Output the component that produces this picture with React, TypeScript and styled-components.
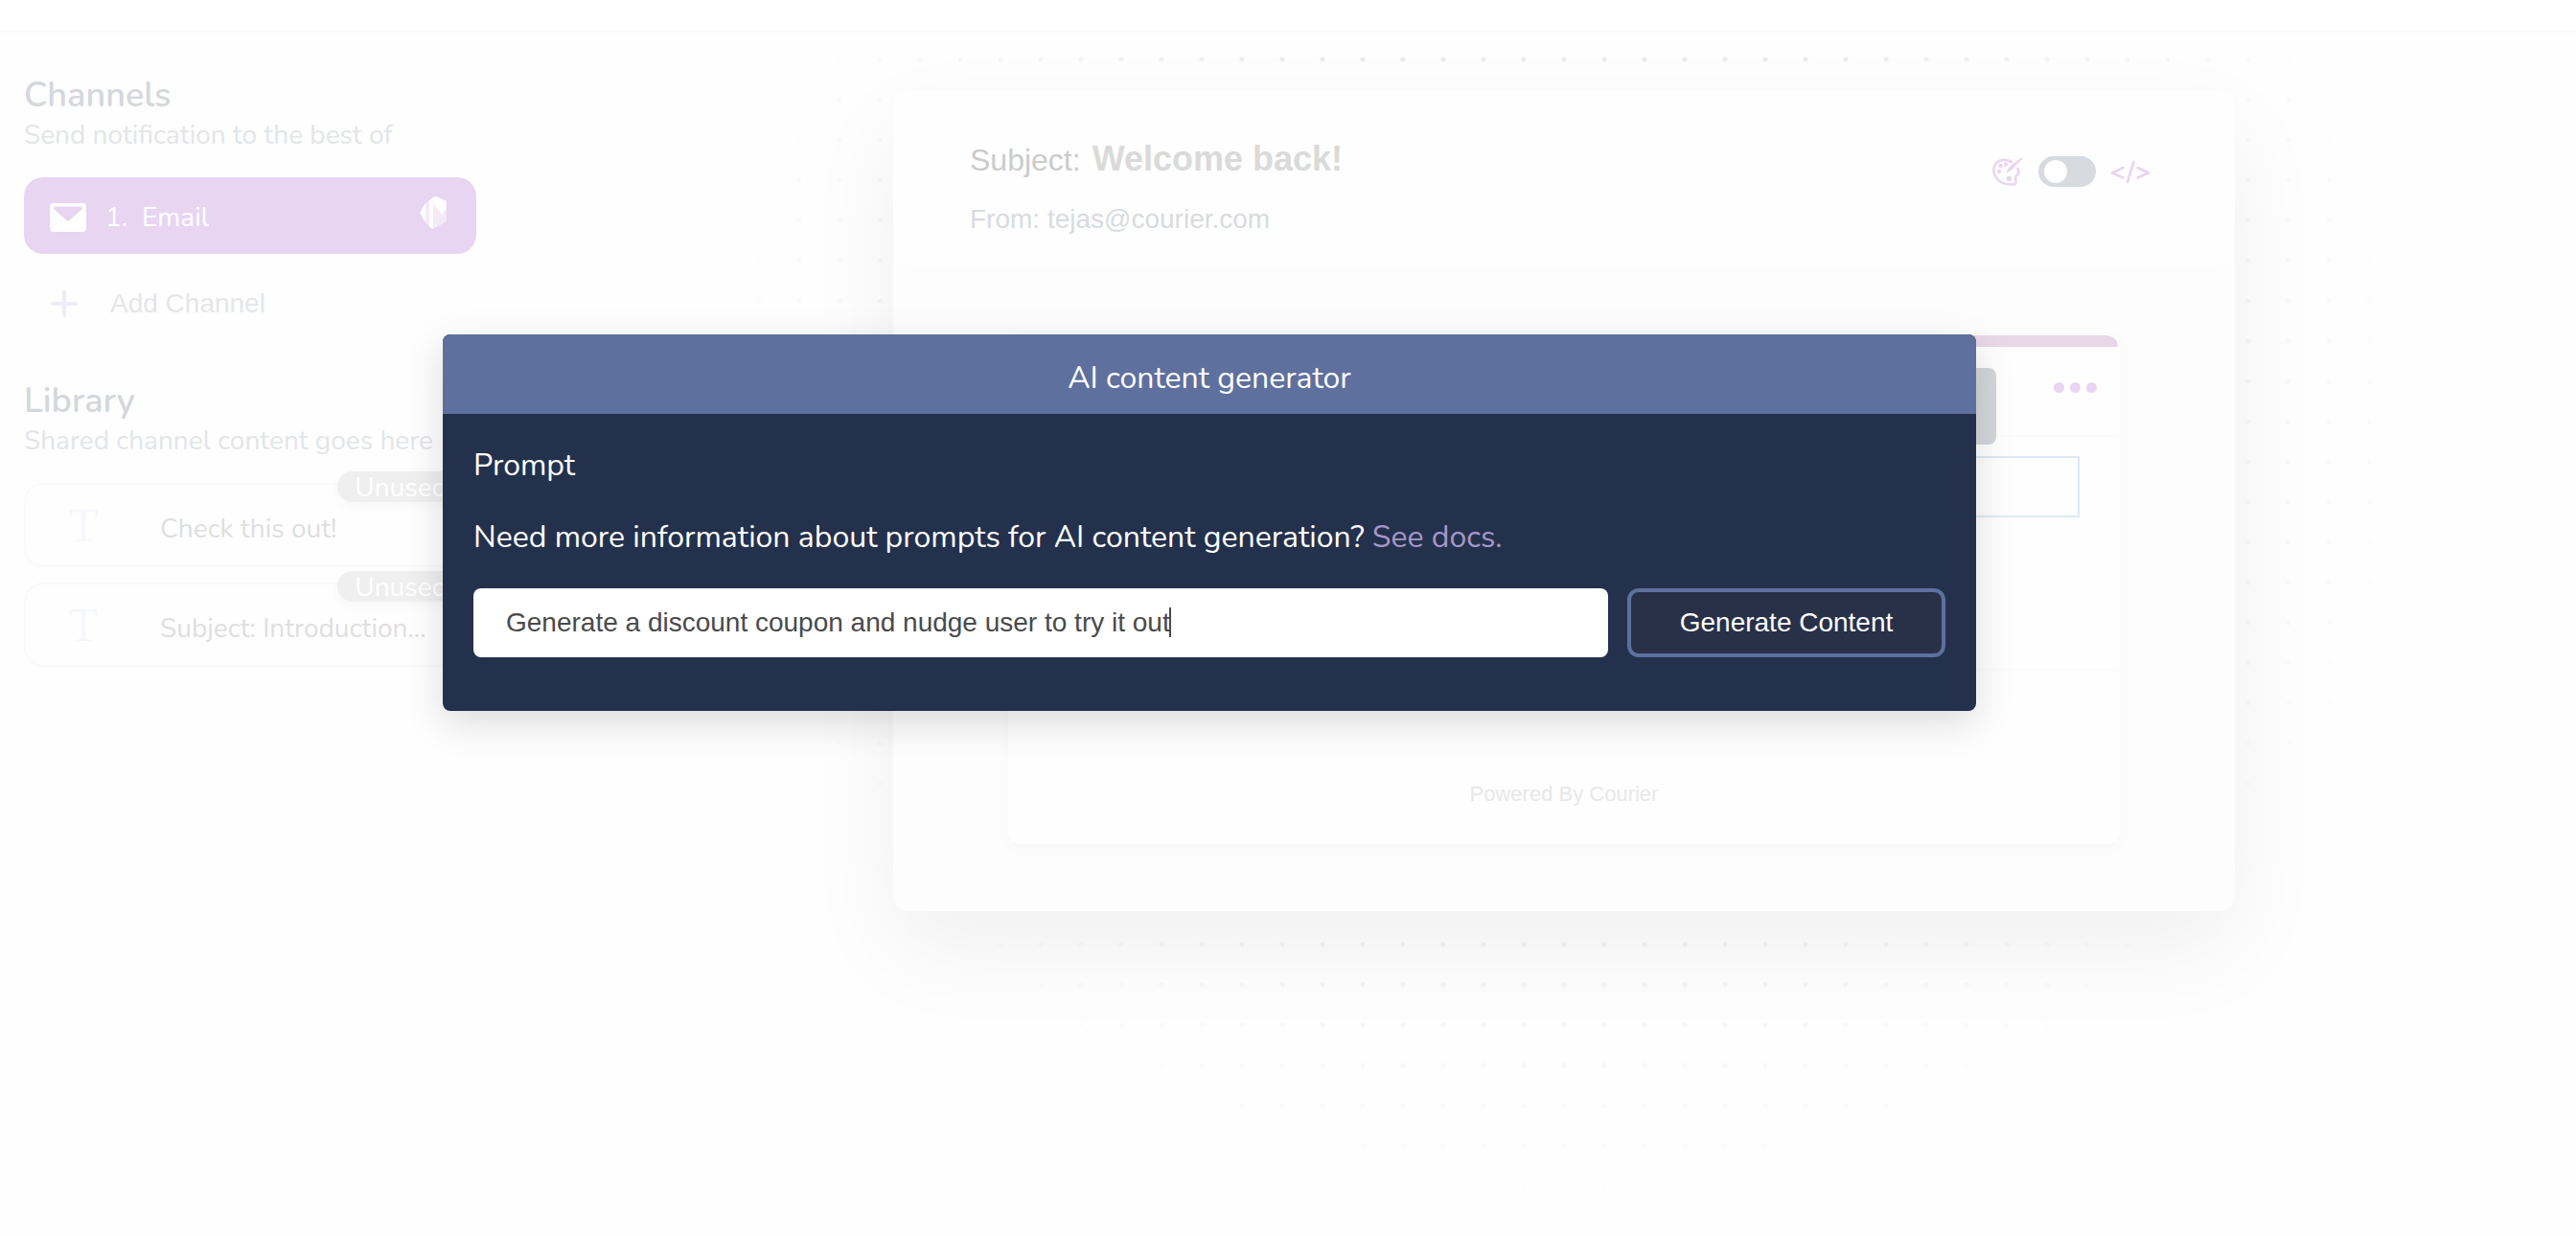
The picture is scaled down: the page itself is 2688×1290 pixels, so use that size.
import React, { useState } from "react";
import styled, { createGlobalStyle } from "styled-components";

const rounded = '"Nunito", Lato, "Open Sans", sans-serif';
const plain = '"Liberation Sans", Arial, sans-serif';

const GlobalStyle = createGlobalStyle`
  *, *::before, *::after { box-sizing: border-box; }
  body { margin: 0; background: #fefefe; font-family: ${rounded}; }
  h1, h2, p, ul, ol { margin: 0; padding: 0; list-style: none; }
  button, input { font: inherit; }
`;

const Page = styled.div`
  display: flex;
  flex-direction: column;
  min-height: 100vh;
`;
const TopBar = styled.header`
  height: 34px;
  background: #fff;
  border-bottom: 2px solid #fafafa;
`;
const Body = styled.div`
  flex: 1;
  display: grid;
  grid-template-columns: 576px minmax(0, 1fr);
`;

const Sidebar = styled.aside`
  display: flex;
  flex-direction: column;
  gap: 43px;
  padding: 43px 0 0 25px;
`;
const Section = styled.section`
  width: 472px;
`;
const SectionTitle = styled.h2`
  font-size: 36px;
  line-height: 46px;
  font-weight: 600;
  color: #d5d7dd;
`;
const SectionNote = styled.p`
  font-size: 28px;
  line-height: 36px;
  color: #e3e5ea;
  white-space: nowrap;
`;
const List = styled.ul`
  display: flex;
  flex-direction: column;
  gap: 16px;
  margin-top: 26px;
`;
const ChannelButton = styled.button`
  display: flex;
  align-items: center;
  width: 100%;
  height: 80px;
  padding: 3px 29px 0 27px;
  border: 0;
  border-radius: 20px;
  background: #e8d5f1;
  color: #fff;
  font-size: 28px;
`;
const ChannelIndex = styled.span`
  margin-left: 20px;
  width: 38px;
  text-align: left;
`;
const ChannelMark = styled.span`
  display: flex;
  margin-left: auto;
  padding-bottom: 10px;
`;
const AddButton = styled.button`
  display: flex;
  align-items: center;
  gap: 34px;
  width: 100%;
  height: 72px;
  padding: 0 28px;
  border: 0;
  background: none;
  font-family: ${plain};
  font-size: 28px;
  color: #e5e6ea;
`;
const LibraryCard = styled.li`
  position: relative;
  display: flex;
  align-items: center;
  height: 88px;
  padding-top: 8px;
  border: 2px solid #fafafa;
  border-radius: 20px;
  font-size: 28px;
  color: #dfdfdf;
`;
const TextGlyph = styled.span`
  width: 140px;
  padding: 0 0 8px 45px;
  font-family: "Liberation Serif", "Times New Roman", serif;
  font-size: 50px;
  line-height: 56px;
  color: #f5f7fa;
`;
const Badge = styled.span`
  position: absolute;
  top: -14px;
  right: 10px;
  height: 32px;
  padding: 0 18px;
  border-radius: 16px;
  background: #efefef;
  box-shadow: 0 4px 12px rgba(0, 0, 0, 0.03);
  color: #fff;
  line-height: 34px;
`;

const Canvas = styled.main`
  position: relative;
  display: flex;
  justify-content: center;
  align-items: flex-start;
  padding-top: 60px;
  &::before {
    content: "";
    position: absolute;
    inset: 0;
    background: radial-gradient(circle, #ebebeb 0 2px, transparent 3px) 27px 7px / 42px 42px;
    mask-image: radial-gradient(900px 820px at 50% 400px, #000 50%, transparent);
  }
`;
const EmailCard = styled.article`
  position: relative;
  width: 1400px;
  border-radius: 16px;
  background: #fdfdfd;
  box-shadow: 0 40px 100px rgba(0, 0, 0, 0.06);
`;
const EmailHead = styled.header`
  display: flex;
  justify-content: space-between;
  align-items: flex-start;
  height: 184px;
  padding: 48px 88px 0 80px;
  border-radius: 16px;
  background: #fefefe;
  font-family: ${plain};
`;
const SubjectLine = styled.div`
  display: flex;
  align-items: baseline;
  gap: 12px;
  font-size: 32px;
  line-height: 48px;
  color: #cbcbcb;
`;
const SubjectText = styled.h1`
  margin: 0;
  font-size: 36px;
  line-height: 48px;
  color: #dadada;
`;
const FromLine = styled.p`
  margin-top: 18px;
  font-size: 28px;
  line-height: 40px;
  color: #d8dbe0;
`;
const Tools = styled.div`
  display: flex;
  align-items: center;
  gap: 15px;
  padding-top: 21px;
`;
const IconButton = styled.button`
  display: flex;
  padding: 0;
  border: 0;
  background: none;
`;
const Toggle = styled.input`
  appearance: none;
  width: 60px;
  height: 32px;
  margin: 0;
  padding: 4px 6px;
  border-radius: 16px;
  background: #d7dadf;
  &::before {
    content: "";
    display: block;
    width: 24px;
    height: 24px;
    border-radius: 50%;
    background: #fff;
  }
  &:checked::before { margin-left: auto; }
`;
const Mail = styled.section`
  display: flex;
  flex-direction: column;
  margin: 72px 120px 70px;
  border-radius: 12px;
  background: #fefefe;
  box-shadow: 0 4px 16px rgba(0, 0, 0, 0.03);
  overflow: hidden;
  font-family: ${plain};
`;
const MailHead = styled.div`
  display: flex;
  justify-content: flex-end;
  align-items: flex-start;
  gap: 60px;
  height: 104px;
  padding: 22px 22px 0;
  margin-right: 2px;
  border-top: 12px solid #e8d8e7;
  border-radius: 0 12px 0 0;
`;
const BlockTools = styled.div`
  position: relative;
  z-index: 1;
  width: 320px;
  height: 80px;
  flex: none;
  border-radius: 8px;
  background: #d3d6da;
`;
const MoreButton = styled(IconButton)`
  gap: 6px;
  padding-top: 15px;
  &::before, &::after, & > i {
    content: "";
    width: 11px;
    height: 11px;
    border-radius: 50%;
    background: #e8d5f1;
  }
`;
const MailBody = styled.div`
  height: 246px;
  padding: 20px 42px;
  border-top: 2px solid #fcfcfc;
  border-bottom: 2px solid #fcfcfc;
`;
const SelectedBlock = styled.div`
  height: 64px;
  border: 2px solid #dbe9f6;
`;
const MailFoot = styled.footer`
  height: 181px;
  padding-top: 113px;
  font-size: 22px;
  line-height: 32px;
  text-align: center;
  color: #e8e8e8;
`;

const Dialog = styled.section`
  position: absolute;
  z-index: 10;
  top: 349px;
  left: 462px;
  width: 1600px;
  border-radius: 8px;
  background: #24314c;
  box-shadow: 0 12px 40px rgba(0, 0, 0, 0.14);
  color: #fff;
  font-size: 32px;
  overflow: hidden;
`;
const DialogTitle = styled.h2`
  padding: 26px 0 17px;
  background: #5e709e;
  font-size: 32px;
  line-height: 40px;
  font-weight: 400;
  text-align: center;
`;
const DialogForm = styled.form`
  padding: 34px 32px 56px;
`;
const PromptLabel = styled.label`
  display: block;
  line-height: 40px;
`;
const Help = styled.p`
  margin-top: 35px;
  line-height: 40px;
`;
const DocsLink = styled.a`
  color: #a598c8;
  text-decoration: none;
`;
const PromptRow = styled.div`
  display: flex;
  gap: 20px;
  margin-top: 33px;
  font-family: ${plain};
  font-size: 28px;
`;
const PromptField = styled.div`
  position: relative;
  flex: 1;
  display: flex;
`;
const PromptInput = styled.input`
  width: 100%;
  height: 72px;
  padding: 0 34px;
  border: 0;
  border-radius: 8px;
  background: #fff;
  color: #4a4a4a;
  outline: 0;
`;
const Caret = styled.span`
  position: absolute;
  top: 20px;
  left: 726px;
  width: 2px;
  height: 31px;
  background: #4a4a4a;
`;
const GenerateButton = styled.button`
  width: 332px;
  height: 72px;
  border: 4px solid #5e709e;
  border-radius: 12px;
  background: #283148;
  color: #fff;
`;

const MailIcon = () => (
  <svg width="38" height="30" viewBox="0 0 38 30" aria-hidden="true">
    <path
      fill="#fff"
      fillRule="evenodd"
      d="M4 0h30a4 4 0 0 1 4 4v22a4 4 0 0 1-4 4H4a4 4 0 0 1-4-4V4a4 4 0 0 1 4-4zM6 3.500C4 3.500 3.600 5.500 4.800 6.700L17.600 18q1.400 1.200 2.800 0L33.200 6.700C34.400 5.500 34 3.500 32 3.500z"
    />
  </svg>
);
const GemIcon = () => (
  <svg width="30" height="34" viewBox="0 0 30 34" aria-hidden="true">
    <path fill="#fff" opacity=".5" d="M6 7 16 0l12 6v20l-14 8-8-6z" />
    <path fill="#fff" d="M0 17 6 7v20zM10 4l4-3v33l-4-2zM14 1l3-1 11 5v7l-5 7-9-12z" />
  </svg>
);
const PlusIcon = () => (
  <svg width="28" height="28" viewBox="0 0 28 28" stroke="#eeecf5" strokeWidth="4" strokeLinecap="round" aria-hidden="true">
    <path d="M14 2v24M2 14h24" />
  </svg>
);
const PaletteIcon = () => (
  <svg width="34" height="32" viewBox="0 0 34 32" fill="none" stroke="#e8d5f1" strokeLinecap="round" aria-hidden="true">
    <path strokeWidth="2.600" d="M21 6C12 1 2.500 5.500 2.500 14.500 2.500 24 11 30 22 29.500c6-.2 3-3.500 3-6.500 0-4 4.500-3.500 3.500-7.500-.3-1-1-1-1-2.500" />
    <path fill="#e8d5f1" strokeWidth="1.500" strokeLinejoin="round" d="M32 2 22.500 8.500c-3 2.300-4.500 4.500-6 8 3-1.500 5.500-3.500 7.500-6.500z" />
    <g fill="#e8d5f1" stroke="none">
      <circle cx="15" cy="8.500" r="2.200" />
      <circle cx="9.500" cy="10" r="2.200" />
      <circle cx="8" cy="16" r="2.200" />
      <circle cx="18.500" cy="23.500" r="2.800" />
    </g>
  </svg>
);
const CodeIcon = () => (
  <svg width="42" height="24" viewBox="0 0 42 24" fill="none" stroke="#e8d5f1" strokeWidth="2.600" strokeLinecap="round" strokeLinejoin="round" aria-hidden="true">
    <path d="M13.500 8 2 13.500l11.500 5M28.500 8 40 13.500l-11.500 5M24.500 2 18 23" />
  </svg>
);

const library = ["Check this out!", "Subject: Introduction..."];

export default function App() {
  const [prompt, setPrompt] = useState("Generate a discount coupon and nudge user to try it out");
  return (
    <>
      <GlobalStyle />
      <Page>
        <TopBar />
        <Body>
          <Sidebar>
            <Section>
              <SectionTitle>Channels</SectionTitle>
              <SectionNote>Send notification to the best of</SectionNote>
              <List as="div">
                <ChannelButton type="button">
                  <MailIcon />
                  <ChannelIndex>1.</ChannelIndex>
                  Email
                  <ChannelMark><GemIcon /></ChannelMark>
                </ChannelButton>
                <AddButton type="button">
                  <PlusIcon />
                  Add Channel
                </AddButton>
              </List>
            </Section>
            <Section>
              <SectionTitle>Library</SectionTitle>
              <SectionNote>Shared channel content goes here</SectionNote>
              <List>
                {library.map((name) => (
                  <LibraryCard key={name}>
                    <TextGlyph aria-hidden="true">T</TextGlyph>
                    {name}
                    <Badge>Unused</Badge>
                  </LibraryCard>
                ))}
              </List>
            </Section>
          </Sidebar>
          <Canvas>
            <EmailCard>
              <EmailHead>
                <div>
                  <SubjectLine>
                    Subject: <SubjectText>Welcome back!</SubjectText>
                  </SubjectLine>
                  <FromLine>From: tejas@courier.com</FromLine>
                </div>
                <Tools>
                  <IconButton type="button" aria-label="Brand"><PaletteIcon /></IconButton>
                  <Toggle type="checkbox" role="switch" aria-label="Code view" />
                  <IconButton type="button" aria-label="Code"><CodeIcon /></IconButton>
                </Tools>
              </EmailHead>
              <Mail>
                <MailHead>
                  <BlockTools />
                  <MoreButton type="button" aria-label="More"><i /></MoreButton>
                </MailHead>
                <MailBody><SelectedBlock /></MailBody>
                <MailFoot>Powered By Courier</MailFoot>
              </Mail>
            </EmailCard>
          </Canvas>
        </Body>
      </Page>
      <Dialog role="dialog" aria-labelledby="generator-title">
        <DialogTitle id="generator-title">AI content generator</DialogTitle>
        <DialogForm onSubmit={(e) => e.preventDefault()}>
          <PromptLabel htmlFor="prompt">Prompt</PromptLabel>
          <Help>
            Need more information about prompts for AI content generation? <DocsLink href="#docs">See docs.</DocsLink>
          </Help>
          <PromptRow>
            <PromptField>
              <PromptInput id="prompt" value={prompt} onChange={(e) => setPrompt(e.target.value)} />
              <Caret />
            </PromptField>
            <GenerateButton type="submit">Generate Content</GenerateButton>
          </PromptRow>
        </DialogForm>
      </Dialog>
    </>
  );
}
